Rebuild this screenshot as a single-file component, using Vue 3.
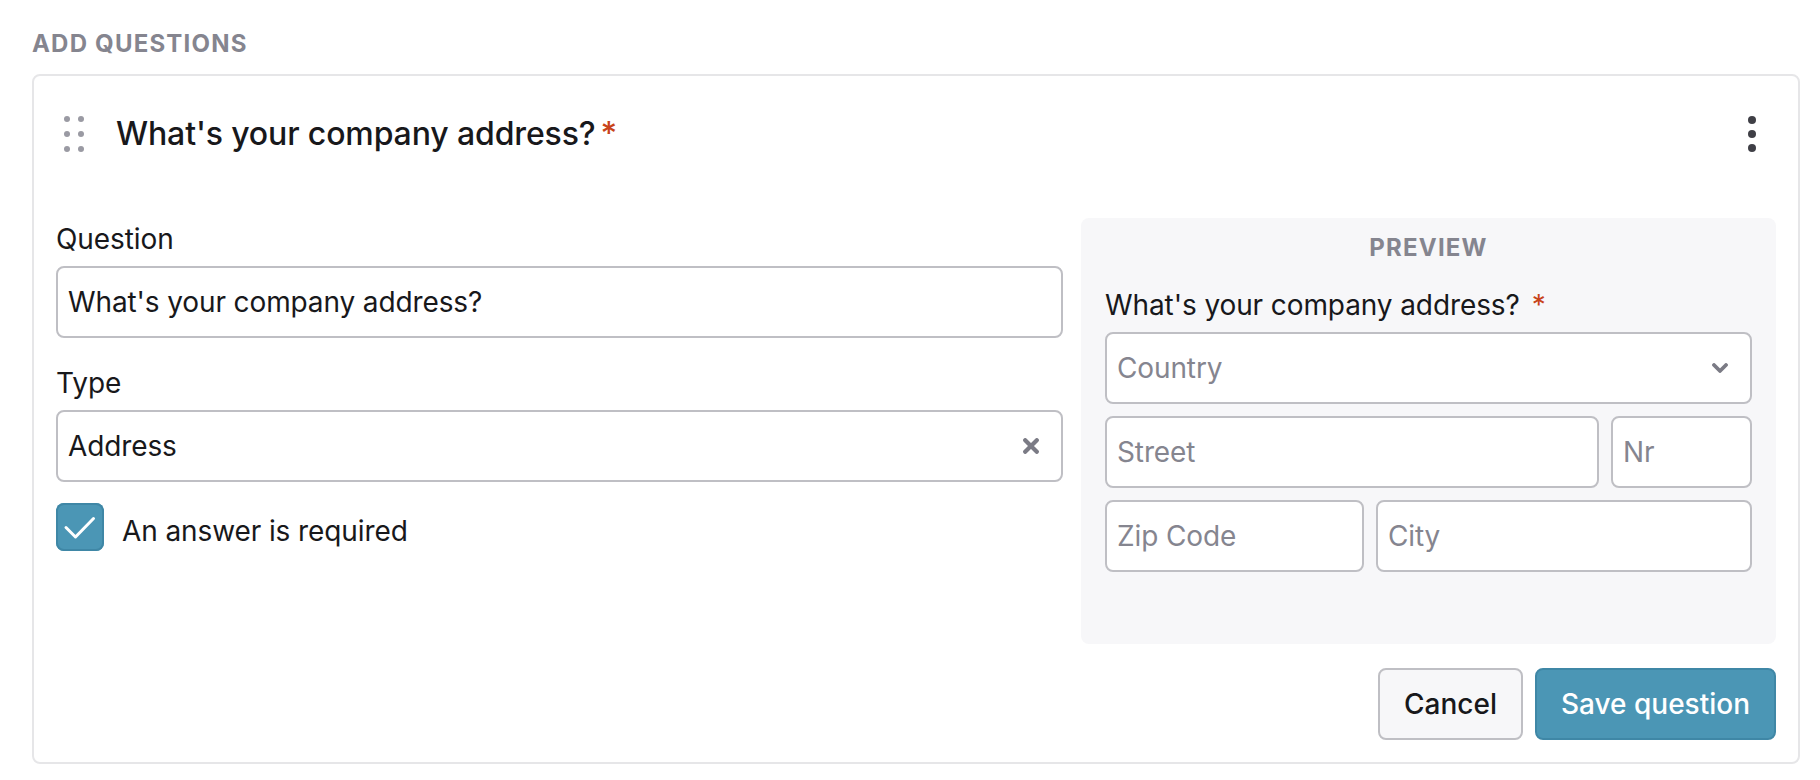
<script setup>
const dotRows = [0, 1, 2]
</script>

<template>
  <div class="page">
    <h2 class="heading">ADD QUESTIONS</h2>
    <section class="card">
      <header class="card-head">
        <svg class="drag" width="20" height="36" viewBox="0 0 20 36" aria-hidden="true">
          <g v-for="row in dotRows" :key="row">
            <circle cx="3" :cy="3 + row * 15" r="3" />
            <circle cx="17" :cy="3 + row * 15" r="3" />
          </g>
        </svg>
        <h3 class="title">What's your company address?<span class="req">*</span></h3>
        <svg class="kebab" width="8" height="36" viewBox="0 0 8 36" aria-hidden="true">
          <circle v-for="row in dotRows" :key="row" cx="4" :cy="4 + row * 14" r="4" />
        </svg>
      </header>

      <div class="body">
        <div class="form">
          <label class="label">Question</label>
          <input class="field" value="What's your company address?" readonly />
          <label class="label label-next">Type</label>
          <div class="field select">
            <span>Address</span>
            <svg width="16" height="16" viewBox="0 0 16 16" aria-hidden="true">
              <path d="M2.200 2.200l11.600 11.600M13.800 2.200L2.200 13.800" fill="none" stroke="#7b7b85" stroke-width="4.200" stroke-linecap="round" />
            </svg>
          </div>
          <div class="check-row">
            <span class="checkbox">
              <svg width="48" height="48" viewBox="0 0 48 48" aria-hidden="true">
                <path d="M10 24.500l9.500 9.500L37.500 15.500" fill="none" stroke="#fff" stroke-width="3" stroke-linecap="round" stroke-linejoin="round" />
              </svg>
            </span>
            <span class="check-label">An answer is required</span>
          </div>
        </div>

        <aside class="preview">
          <div class="preview-title">PREVIEW</div>
          <div class="preview-q">What's your company address?<span class="req req-gap">*</span></div>
          <div class="address">
            <div class="field select placeholder">
              <span>Country</span>
              <svg width="16" height="10" viewBox="0 0 16 10" aria-hidden="true">
                <path d="M2 2l6 6 6-6" fill="none" stroke="#7b7b85" stroke-width="3.800" stroke-linecap="round" stroke-linejoin="round" />
              </svg>
            </div>
            <div class="addr-row street-row">
              <input class="field" placeholder="Street" readonly />
              <input class="field" placeholder="Nr" readonly />
            </div>
            <div class="addr-row zip-row">
              <input class="field" placeholder="Zip Code" readonly />
              <input class="field" placeholder="City" readonly />
            </div>
          </div>
        </aside>
      </div>

      <footer class="actions">
        <button class="btn btn-cancel" type="button">Cancel</button>
        <button class="btn btn-save" type="button">Save question</button>
      </footer>
    </section>
  </div>
</template>

<style>
html, body { background: #fff; }
</style>

<style scoped>
* { box-sizing: border-box; }
.page {
  width: 1820px;
  height: 780px;
  padding: 27px 20px 0 32px;
  font-family: Inter, "Liberation Sans", sans-serif;
  color: #18181b;
  overflow: hidden;
}
.heading {
  margin: 0 0 13px;
  font-size: 24px;
  line-height: 34px;
  font-weight: 700;
  letter-spacing: 1.2px;
  color: #85858f;
}
.card {
  border: 2px solid #e6e6e8;
  border-radius: 8px;
  padding: 22px;
  background: #fff;
}
.card-head {
  display: flex;
  align-items: center;
  height: 72px;
  margin-bottom: 48px;
}
.drag { margin-left: 8px; flex: none; fill: #9a9aa3; }
.title {
  margin: 0 0 0 32px;
  flex: 1;
  font-size: 32px;
  line-height: 40px;
  font-weight: 500;
  letter-spacing: -0.13px;
}
.req { color: #c8431b; margin-left: 5px; }
.kebab { flex: none; margin-right: 20px; fill: #3f3f46; }
.body {
  display: grid;
  grid-template-columns: 1007px 1fr;
  gap: 18px;
}
.label {
  display: block;
  padding-top: 1px;
  font-size: 28px;
  line-height: 40px;
  margin-bottom: 7px;
  letter-spacing: -0.08px;
}
.label-next { margin-top: 24px; }
.field {
  display: block;
  width: 100%;
  height: 72px;
  padding: 0 10px;
  border: 2px solid #bfbfc4;
  border-radius: 8px;
  background: #fff;
  font-family: inherit;
  font-size: 28px;
  letter-spacing: -0.12px;
  color: #18181b;
  outline: none;
}
.field::placeholder { color: #85858f; opacity: 1; }
.select {
  display: flex;
  align-items: center;
  justify-content: space-between;
  padding-right: 22px;
}
.placeholder { color: #85858f; }
.check-row {
  display: flex;
  align-items: center;
  gap: 18px;
  margin-top: 21px;
}
.checkbox {
  width: 48px;
  height: 48px;
  border-radius: 8px;
  background: #4b96b5;
  box-shadow: inset 0 0 0 2px #3f87a6;
  display: block;
}
.checkbox svg { display: block; }
.check-label {
  font-size: 28px;
  letter-spacing: -0.1px;
  padding-top: 7px;
}
.preview {
  height: 426px;
  padding: 0 24px;
  background: #f7f7f9;
  border-radius: 8px;
}
.preview-title {
  padding-top: 13px;
  text-align: center;
  font-size: 24px;
  line-height: 34px;
  font-weight: 700;
  letter-spacing: 1.2px;
  color: #85858f;
}
.preview-q {
  margin-top: 20px;
  font-size: 28px;
  line-height: 40px;
  letter-spacing: -0.1px;
}
.req-gap { margin-left: 12px; }
.address {
  margin-top: 7px;
  display: flex;
  flex-direction: column;
  gap: 12px;
}
.addr-row { display: grid; column-gap: 12px; }
.street-row { grid-template-columns: 1fr 141px; }
.zip-row { grid-template-columns: 259px 1fr; }
.actions {
  display: flex;
  justify-content: flex-end;
  gap: 12px;
  margin-top: 24px;
}
.btn {
  height: 72px;
  border-radius: 8px;
  font-family: inherit;
  font-size: 28px;
  font-weight: 500;
}
.btn-cancel {
  width: 145px;
  background: #f7f7f9;
  border: 2px solid #bfbfc4;
  color: #18181b;
}
.btn-save {
  width: 241px;
  background: #4b96b5;
  border: 2px solid #3f87a6;
  color: #fff;
}
</style>
